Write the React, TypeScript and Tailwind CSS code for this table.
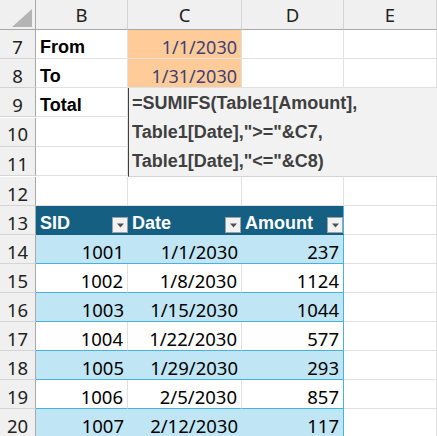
const rows = [
  { sid: "1001", date: "1/1/2030", amount: "237" },
  { sid: "1002", date: "1/8/2030", amount: "1124" },
  { sid: "1003", date: "1/15/2030", amount: "1044" },
  { sid: "1004", date: "1/22/2030", amount: "577" },
  { sid: "1005", date: "1/29/2030", amount: "293" },
  { sid: "1006", date: "2/5/2030", amount: "857" },
  { sid: "1007", date: "2/12/2030", amount: "117" },
];

const num = "font-['Noto_Sans',sans-serif] text-[18.5px]";

function RowNum({ n }: { n: number }) {
  return (
    <div className={`h-[29px] border-r border-b border-r-[#a8a8a8] border-b-[#d4d4d4] bg-[#f0f0f0] flex items-end justify-center pb-[2px] leading-none text-[#222] ${num}`}>
      {n}
    </div>
  );
}

function Cell({ children, className = "" }: { children?: React.ReactNode; className?: string }) {
  return (
    <div className={`h-[29px] border-r border-b border-[#e1e1e1] flex items-end pb-[2px] px-[4px] text-[18px] leading-none ${className}`}>
      {children}
    </div>
  );
}

function Filter() {
  return (
    <div className="w-[16px] h-[16px] bg-[#f2f2f2] border border-[#a0a0a0] flex items-center justify-center mb-[-1px]">
      <svg width="9" height="5" viewBox="0 0 9 5">
        <path d="M1 0.5h7L4.5 4.5z" fill="#505050" />
      </svg>
    </div>
  );
}

export default function App() {
  return (
    <div className="w-[437px] h-[436px] overflow-hidden bg-white font-['Liberation_Sans',sans-serif]">
      <div className="grid grid-cols-[36px_92px_114px_102px_93px]">
        {/* column header row */}
        <div className="h-[30px] bg-[#f0f0f0] border-r border-b border-[#a8a8a8] relative">
          <svg className="absolute left-[12px] top-[9px]" width="20" height="18" viewBox="0 0 20 18">
            <path d="M20 0V18H0z" fill="#b4b4b4" />
          </svg>
        </div>
        {["B", "C", "D", "E"].map((c) => (
          <div
            key={c}
            className={`h-[30px] bg-[#f0f0f0] border-r border-b border-r-[#d4d4d4] border-b-[#a8a8a8] flex items-center justify-center text-[#222] ${num}`}
          >
            {c}
          </div>
        ))}

        {/* row 7 */}
        <RowNum n={7} />
        <Cell className="font-bold">From</Cell>
        <Cell className={`justify-end bg-[#ffcc99] border-[#7f7f7f] text-[#3f3f76] ${num}`}>1/1/2030</Cell>
        <Cell />
        <Cell />

        {/* row 8 */}
        <RowNum n={8} />
        <Cell className="font-bold">To</Cell>
        <Cell className={`justify-end bg-[#ffcc99] border-[#7f7f7f] text-[#3f3f76] ${num}`}>1/31/2030</Cell>
        <Cell />
        <Cell />

        {/* rows 9-11 with formula */}
        <RowNum n={9} />
        <Cell className="font-bold">Total</Cell>
        <div className="col-span-3 row-span-3 bg-[#f2f2f2] border-l border-l-[#3f3f3f] border-b border-b-[#d4d4d4] text-[18px] font-bold text-[#3f3f3f] leading-[29px] pl-[3px] pt-[1px] whitespace-nowrap">
          <div>=SUMIFS(Table1[Amount],</div>
          <div>Table1[Date],"&gt;="&amp;C7,</div>
          <div>Table1[Date],"&lt;="&amp;C8)</div>
        </div>
        <RowNum n={10} />
        <Cell />
        <RowNum n={11} />
        <Cell />

        {/* row 12 */}
        <RowNum n={12} />
        <Cell />
        <Cell />
        <Cell />
        <Cell />

        {/* row 13 table header */}
        <RowNum n={13} />
        <div className="h-[29px] bg-[#156082] border-b border-[#156082] flex items-end justify-between pb-[2px] pl-[4px] text-[18px] leading-none font-bold text-white">
          <span>SID</span>
          <Filter />
        </div>
        <div className="h-[29px] bg-[#156082] border-b border-[#156082] flex items-end justify-between pb-[2px] pl-[4px] pr-[1px] text-[18px] leading-none font-bold text-white">
          <span>Date</span>
          <Filter />
        </div>
        <div className="h-[29px] bg-[#156082] border-b border-r border-[#156082] border-r-[#44b3e1] flex items-end justify-between pb-[2px] pl-[3px] text-[18px] leading-none font-bold text-white">
          <span>Amount</span>
          <Filter />
        </div>
        <Cell />

        {rows.map((r, i) => {
          const band = i % 2 === 0;
          const bg = band ? "bg-[#c0e6f5]" : "bg-white";
          const side = band ? "" : "border-r border-r-[#e1e1e1]";
          return (
            <div key={r.sid} className="contents">
              <RowNum n={14 + i} />
              <div className={`h-[29px] ${bg} border-b border-b-[#44b3e1] flex items-end justify-end pb-[2px] pr-[4px] leading-none text-black ${num} ${side}`}>
                {r.sid}
              </div>
              <div className={`h-[29px] ${bg} border-b border-b-[#44b3e1] flex items-end justify-end pb-[2px] pr-[4px] leading-none text-black ${num} ${side}`}>
                {r.date}
              </div>
              <div className={`h-[29px] ${bg} border-b border-r border-b-[#44b3e1] border-r-[#44b3e1] flex items-end justify-end pb-[2px] pr-[4px] leading-none text-black ${num}`}>
                {r.amount}
              </div>
              <Cell />
            </div>
          );
        })}
      </div>
    </div>
  );
}
